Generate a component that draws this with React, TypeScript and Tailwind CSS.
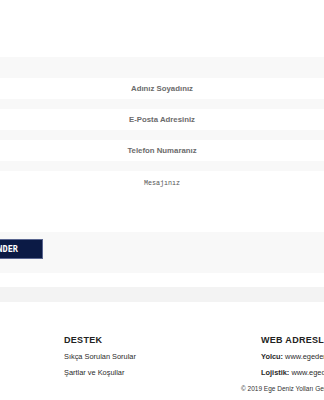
const inputCls =
	"block w-full h-[21px] bg-white text-center text-[7.8px] font-bold text-[#666] placeholder:text-[#6b6b6b] outline-none border-0"

const App = () => {
	return (
		<main className="w-[324px] h-[400px] overflow-hidden bg-white font-['Liberation_Sans',Arial,sans-serif]">
			<div className="h-[57px]" />

			{/* FORM */}
			<form className="bg-[#f8f8f8] pt-[21px] pb-[14px] flex flex-col gap-[10px]">
				<input className={inputCls} placeholder="Adınız Soyadınız" />
				<input className={inputCls} placeholder="E-Posta Adresiniz" />
				<input className={inputCls} placeholder="Telefon Numaranız" />
				<textarea
					className="block w-full h-[61px] bg-white text-center font-['Liberation_Mono',monospace] text-[6.7px] text-[#555] placeholder:text-[#555] pt-[7px] resize-none outline-none"
					placeholder="Mesajınız"
				/>
				<div className="-mt-[3px] flex">
					<button
						type="button"
						className="block shrink-0 -ml-[38px] h-[20px] w-[81px] bg-[#0b1a45] border border-[#5a6690] text-white text-[8.6px] leading-[18px] font-bold font-['DejaVu_Sans_Mono',monospace]"
					>
						GÖNDER
					</button>
				</div>
			</form>

			<div className="h-[14px]" />
			<div className="h-[15px] bg-[#f3f3f3]" />

			{/* FOOTER */}
			<footer className="pt-[33px] flex whitespace-nowrap">
				<div className="ml-[64px] w-[197px] shrink-0 flex flex-col">
					<h3 className="text-[9px] font-bold text-[#222] tracking-[0.3px] leading-[11px]">DESTEK</h3>
					<a className="mt-[6px] text-[7.4px] text-[#2a2a2a] leading-[10px]">Sıkça Sorulan Sorular</a>
					<a className="mt-[6px] text-[7.4px] text-[#2a2a2a] leading-[10px]">Şartlar ve Koşullar</a>
				</div>
				<div className="shrink-0 flex flex-col">
					<h3 className="text-[9px] font-bold text-[#222] tracking-[0.3px] leading-[11px]">WEB ADRESLERİ</h3>
					<p className="mt-[6px] text-[7.4px] text-[#2a2a2a] leading-[10px]">
						<b>Yolcu:</b> www.egedenizyollari.com
					</p>
					<p className="mt-[6px] text-[7.4px] text-[#2a2a2a] leading-[10px]">
						<b>Lojistik:</b> www.egedenizyollari.com.tr
					</p>
					<p className="mt-[6px] -ml-[20px] text-[6.5px] text-[#333] leading-[9px]">
						© 2019 Ege Deniz Yolları Gemi İşletmeciliği
					</p>
				</div>
			</footer>
		</main>
	)
}
export default App
